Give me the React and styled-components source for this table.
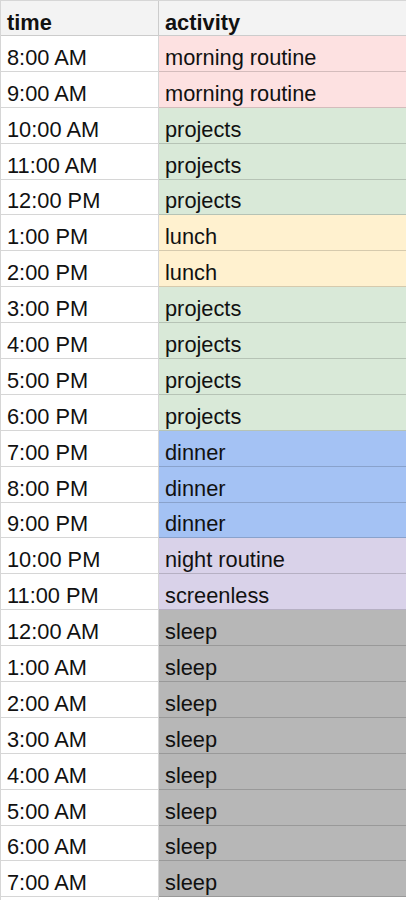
import React from "react";
import styled, { createGlobalStyle } from "styled-components";

const Global = createGlobalStyle`
  html, body { margin: 0; padding: 0; background: #ffffff; }
  body { font-family: "Liberation Sans", Arial, Helvetica, sans-serif; overflow: hidden; }
`;

const colors = {
  morning: "#fde1e1",
  projects: "#d9e9d8",
  lunch: "#fff1cf",
  dinner: "#a4c2f4",
  night: "#d9d2e9",
  sleep: "#b7b7b7",
  none: "#ffffff",
};

const rows = [
  ["8:00 AM", "morning routine", "morning"],
  ["9:00 AM", "morning routine", "morning"],
  ["10:00 AM", "projects", "projects"],
  ["11:00 AM", "projects", "projects"],
  ["12:00 PM", "projects", "projects"],
  ["1:00 PM", "lunch", "lunch"],
  ["2:00 PM", "lunch", "lunch"],
  ["3:00 PM", "projects", "projects"],
  ["4:00 PM", "projects", "projects"],
  ["5:00 PM", "projects", "projects"],
  ["6:00 PM", "projects", "projects"],
  ["7:00 PM", "dinner", "dinner"],
  ["8:00 PM", "dinner", "dinner"],
  ["9:00 PM", "dinner", "dinner"],
  ["10:00 PM", "night routine", "night"],
  ["11:00 PM", "screenless", "night"],
  ["12:00 AM", "sleep", "sleep"],
  ["1:00 AM", "sleep", "sleep"],
  ["2:00 AM", "sleep", "sleep"],
  ["3:00 AM", "sleep", "sleep"],
  ["4:00 AM", "sleep", "sleep"],
  ["5:00 AM", "sleep", "sleep"],
  ["6:00 AM", "sleep", "sleep"],
  ["7:00 AM", "sleep", "sleep"],
  ["", "", "none"],
];

const Sheet = styled.div`
  width: 406px;
  height: 900px;
  overflow: hidden;
  border-left: 1px solid #d6d6d6;
  box-sizing: border-box;
`;

const Row = styled.div`
  display: grid;
  grid-template-columns: 158px 1fr;
  height: ${(p) => (p.$header ? "36px" : "35.9px")};
  box-sizing: border-box;
  border-top: ${(p) => (p.$header ? "1px solid #d6d6d6" : "none")};
  background: ${(p) => (p.$header ? "#f3f3f3" : "transparent")};
`;

const Cell = styled.div`
  display: flex;
  align-items: flex-end;
  box-sizing: border-box;
  padding: 0 0 ${(p) => (p.$header ? "0px" : "1px")} 6px;
  background: ${(p) => p.$bg || "transparent"};
  border-right: 1px solid rgba(0, 0, 0, 0.16);
  border-bottom: 1px solid rgba(0, 0, 0, 0.16);
  font-size: 21.8px;
  line-height: 25px;
  font-weight: ${(p) => (p.$header ? 700 : 400)};
  color: #111;
  white-space: nowrap;
  overflow: hidden;
`;

const ActivityCell = styled(Cell)`
  padding-left: 6px;
  border-right: none;
`;

export default function App() {
  return (
    <>
      <Global />
      <Sheet>
        <Row $header>
          <Cell $header>time</Cell>
          <ActivityCell $header>activity</ActivityCell>
        </Row>
        {rows.map(([t, a, c], i) => (
          <Row key={i}>
            <Cell>{t}</Cell>
            <ActivityCell $bg={colors[c]}>{a}</ActivityCell>
          </Row>
        ))}
      </Sheet>
    </>
  );
}
